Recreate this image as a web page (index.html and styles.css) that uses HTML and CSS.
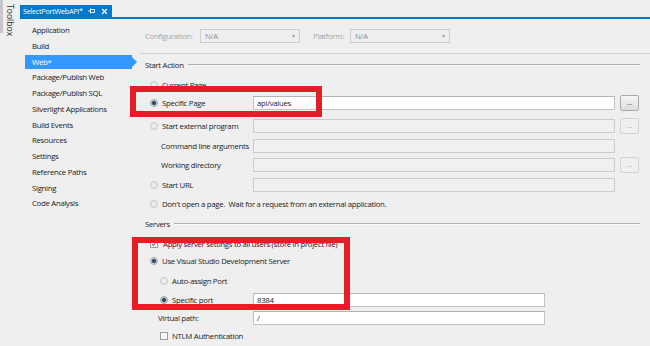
FILE: index.html
```html
<!DOCTYPE html>
<html lang="en">
<head>
  <meta charset="UTF-8">
  <title>SelectPortWebAPI - Web</title>
  <link rel="stylesheet" href="styles.css">
</head>
<body>

<div class="window">
  <!-- collapsed toolbox on the left -->
  <div class="toolbox">
    <span class="toolbox-grip"></span>
    <span class="toolbox-label">Toolbox</span>
  </div>

  <div class="doc">
    <div class="tabbar">
      <div class="tab">
        <span>SelectPortWebAPI*</span>
        <svg class="tab-icon" width="8" height="8" viewBox="0 0 8 8"><path d="M0 4h2.5M2.5 1.5v5M2.5 2.5h4v3h-4" fill="none" stroke="#fff" stroke-width="0.9"/></svg>
        <svg class="tab-icon" width="7" height="7" viewBox="0 0 7 7"><path d="M1 1l5 5M6 1l-5 5" stroke="#fff" stroke-width="1.1"/></svg>
      </div>
    </div>

    <div class="pane">
      <ul class="nav">
        <li>Application</li>
        <li>Build</li>
        <li class="active">Web*</li>
        <li>Package/Publish Web</li>
        <li>Package/Publish SQL</li>
        <li>Silverlight Applications</li>
        <li>Build Events</li>
        <li>Resources</li>
        <li>Settings</li>
        <li>Reference Paths</li>
        <li>Signing</li>
        <li>Code Analysis</li>
      </ul>

      <div class="content">
        <div class="config">
          <span class="config-label cfg">Configuration:</span>
          <span class="select">N/A <span class="caret">▾</span></span>
          <span class="config-label plat">Platform:</span>
          <span class="select">N/A <span class="caret">▾</span></span>
        </div>

        <div class="sechead"><span>Start Action</span></div>

        <div class="row mt6">
          <label class="opt"><span class="radio off"></span>Current Page</label>
        </div>
        <div class="row mt3">
          <label class="opt"><span class="radio on"></span>Specific Page</label>
          <span class="field on">api/values</span>
          <span class="more on">...</span>
        </div>
        <div class="row mt9">
          <label class="opt"><span class="radio off"></span>Start external program</label>
          <span class="field"></span>
          <span class="more">...</span>
        </div>
        <div class="row mt7">
          <label class="opt plain">Command line arguments</label>
          <span class="field"></span>
        </div>
        <div class="row mt4">
          <label class="opt plain">Working directory</label>
          <span class="field"></span>
          <span class="more">...</span>
        </div>
        <div class="row mt7">
          <label class="opt"><span class="radio off"></span>Start URL</label>
          <span class="field"></span>
        </div>
        <div class="row mt5">
          <label class="opt wide"><span class="radio off"></span>Don't open a page.&nbsp; Wait for a request from an external application.</label>
        </div>

        <div class="sechead mt6"><span>Servers</span></div>

        <div class="row mt6">
          <label class="opt wide"><span class="check on"><svg width="6" height="6" viewBox="0 0 6 6"><path d="M0.8 3l1.5 1.6L5.2 0.8" fill="none" stroke="#3a3a3a" stroke-width="1"/></svg></span>Apply server settings to all users (store in project file)</label>
        </div>
        <div class="row mt3">
          <label class="opt wide"><span class="radio on"></span>Use Visual Studio Development Server</label>
        </div>
        <div class="row short mt6">
          <label class="opt sub"><span class="radio off"></span>Auto-assign Port</label>
        </div>
        <div class="row short mt5">
          <label class="opt sub"><span class="radio on"></span>Specific port</label>
          <span class="field on">8384</span>
        </div>
        <div class="row short mt4">
          <label class="opt vpath">Virtual path:</label>
          <span class="field on">/</span>
        </div>
        <div class="row short mt4">
          <label class="opt sub"><span class="check"></span>NTLM Authentication</label>
        </div>
      </div>
    </div>
  </div>
</div>

<!-- red annotation frames drawn over the dialog -->
<div class="callout callout-page"></div>
<div class="callout callout-server"></div>

</body>
</html>
```

FILE: styles.css
```css
body {
  margin: 0;
  background-color: #efeff0;
  font-family: "Open Sans", "Liberation Sans", sans-serif;
  font-size: 7.8px;
  letter-spacing: -0.3px;
  color: #1b1b1b;
}

.window { display: flex; height: 346px; overflow: hidden; }

.toolbox { width: 20px; flex: none; display: flex; align-items: flex-start; gap: 1px; }
.toolbox-grip { width: 3px; height: 33px; background-color: #c8c8cc; }
.toolbox-label {
  writing-mode: vertical-rl;
  padding-top: 4px;
  color: #333;
  font-size: 8.6px;
  letter-spacing: 0;
}

.doc { flex: 1; display: flex; flex-direction: column; min-width: 0; }

.tabbar {
  height: 17px;
  border-bottom: 2px solid #007acc;
  display: flex;
  align-items: flex-end;
}
.tab {
  height: 12px;
  display: flex;
  align-items: center;
  gap: 5px;
  padding: 0 4px 0 3px;
  background-color: #007acc;
  color: #fff;
  font-size: 7.3px;
}
.tab-icon { display: block; }

.pane { flex: 1; display: flex; }

.nav {
  list-style: none;
  margin: 3px 0 0 5px;
  padding: 0;
  width: 107px;
  flex: none;
}
.nav li {
  position: relative;
  height: 14px;
  line-height: 14px;
  margin-bottom: 1.75px;
  padding-left: 7px;
  white-space: nowrap;
}
.nav li:first-child { margin-top: 1px; }
.nav li.active { background-color: #3399ff; color: #fff; }
.nav li.active::after {
  content: "";
  position: absolute;
  right: -5px;
  top: 2px;
  border-left: 5px solid #3399ff;
  border-top: 5px solid transparent;
  border-bottom: 5px solid transparent;
}

.content { flex: 1; margin-left: 8px; padding-top: 10px; min-width: 0; }

.config {
  display: flex;
  align-items: center;
  height: 14px;
  padding: 0 0 10px 5px;
  border-bottom: 1px solid #d2d2d2;
}
.config-label { color: #a4a4a4; }
.config-label.cfg { width: 55px; }
.config-label.plat { width: 37px; margin-left: 13px; }
.select {
  box-sizing: border-box;
  width: 100px;
  height: 14px;
  display: flex;
  align-items: center;
  justify-content: space-between;
  padding: 0 4px;
  border: 1px solid #cdcdcd;
  color: #8c8c8c;
}
.caret { font-size: 6px; color: #a0a0a0; }

.sechead {
  display: flex;
  align-items: center;
  height: 14px;
  margin-top: 4px;
  padding: 0 10px 0 5px;
}
.sechead::after {
  content: "";
  flex: 1;
  margin-left: 4px;
  border-top: 1px solid #b0b0b0;
  border-bottom: 1px solid #fafafa;
}

.row {
  display: grid;
  grid-template-columns: 103px 362px 19px;
  column-gap: 5px;
  align-items: center;
  height: 14px;
  padding-left: 5px;
}
.row.short { grid-template-columns: 103px 292px; }

.mt3 { margin-top: 3px; }
.mt4 { margin-top: 4px; }
.mt5 { margin-top: 5px; }
.mt6 { margin-top: 6px; }
.mt7 { margin-top: 7px; }
.mt9 { margin-top: 9px; }

.opt {
  display: flex;
  align-items: center;
  gap: 4px;
  padding-left: 5px;
  white-space: nowrap;
}
.opt.plain { padding-left: 16px; }
.opt.sub { padding-left: 15px; }
.opt.vpath { padding-left: 13px; }
.opt.wide { grid-column: 1 / -1; }

.radio {
  box-sizing: border-box;
  width: 8px;
  height: 8px;
  flex: none;
  border-radius: 50%;
  border: 1px solid #a6a6a6;
  background: radial-gradient(circle, #fbfbfb, #dcdcdc);
}
.radio.off { border-color: #c8c8c8; background: radial-gradient(circle, #f2f2f2, #e0e0e0); }
.radio.on { background: radial-gradient(circle, #2d4d68 0 1.6px, #8ea4b6 2.2px, #e6e9ec 3px); }

.check {
  box-sizing: border-box;
  width: 8px;
  height: 8px;
  flex: none;
  display: flex;
  align-items: center;
  justify-content: center;
  border: 1px solid #a0a0a0;
  background-color: #f6f6f6;
}
.check.on { margin-right: 1px; }

.field {
  box-sizing: border-box;
  height: 14px;
  line-height: 12px;
  padding: 0 3px;
  border: 1px solid #cbcbcb;
  background-color: #f0f0f0;
  overflow: hidden;
}
.field.on { background-color: #fff; border-color: #c2c2c2; border-top-color: #b4b4b4; }

.more {
  box-sizing: border-box;
  height: 16px;
  line-height: 12px;
  text-align: center;
  border: 1px solid #d2d2d2;
  border-radius: 2px;
  background-color: #efefef;
  color: #b0b0b0;
}
.more.on {
  border-color: #a9a9a9;
  background: linear-gradient(#f6f6f6, #dddddd);
  color: #555;
}

.callout {
  position: absolute;
  box-sizing: border-box;
  border: 6px solid #e31e26;
}
.callout-page { left: 130px; top: 86px; width: 192px; height: 31px; }
.callout-server { left: 132px; top: 237px; width: 218px; height: 73px; }
```
